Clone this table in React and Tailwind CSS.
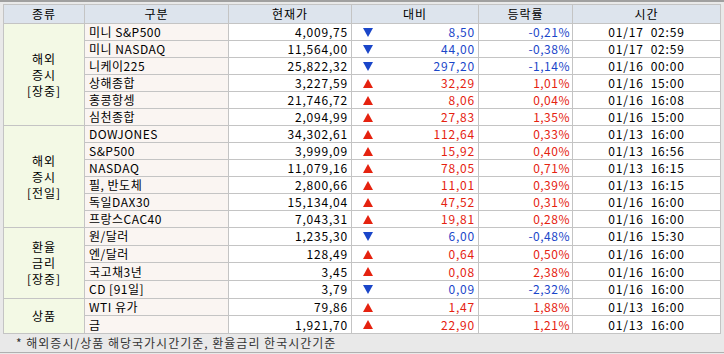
const groups = [
  {
    label: ["해외", "증시", "[장중]"],
    rows: [
      ["미니 S&P500", "4,009,75", "down", "8,50", "-0,21%", "01/17  02:59"],
      ["미니 NASDAQ", "11,564,00", "down", "44,00", "-0,38%", "01/17  02:59"],
      ["니케이225", "25,822,32", "down", "297,20", "-1,14%", "01/16  00:00"],
      ["상해종합", "3,227,59", "up", "32,29", "1,01%", "01/16  15:00"],
      ["홍콩항셍", "21,746,72", "up", "8,06", "0,04%", "01/16  16:08"],
      ["심천종합", "2,094,99", "up", "27,83", "1,35%", "01/16  15:00"],
    ],
  },
  {
    label: ["해외", "증시", "[전일]"],
    rows: [
      ["DOWJONES", "34,302,61", "up", "112,64", "0,33%", "01/13  16:00"],
      ["S&P500", "3,999,09", "up", "15,92", "0,40%", "01/13  16:56"],
      ["NASDAQ", "11,079,16", "up", "78,05", "0,71%", "01/13  16:15"],
      ["필, 반도체", "2,800,66", "up", "11,01", "0,39%", "01/13  16:15"],
      ["독일DAX30", "15,134,04", "up", "47,52", "0,31%", "01/16  16:00"],
      ["프랑스CAC40", "7,043,31", "up", "19,81", "0,28%", "01/16  16:00"],
    ],
  },
  {
    label: ["환율", "금리", "[장중]"],
    rows: [
      ["원/달러", "1,235,30", "down", "6,00", "-0,48%", "01/16  15:30"],
      ["엔/달러", "128,49", "up", "0,64", "0,50%", "01/16  16:00"],
      ["국고채3년", "3,45", "up", "0,08", "2,38%", "01/16  16:00"],
      ["CD [91일]", "3,79", "down", "0,09", "-2,32%", "01/16  16:00"],
    ],
  },
  {
    label: ["상품"],
    rows: [
      ["WTI 유가", "79,86", "up", "1,47", "1,88%", "01/13  16:00"],
      ["금", "1,921,70", "up", "22,90", "1,21%", "01/13  16:00"],
    ],
  },
];

const Arrow = ({ dir }) =>
  dir === "up" ? (
    <svg width="10" height="9" viewBox="0 0 10 9">
      <polygon points="5,0 10,9 0,9" fill="#e5220f" />
    </svg>
  ) : (
    <svg width="10" height="9" viewBox="0 0 10 9">
      <polygon points="0,0 10,0 5,9" fill="#1a46c9" />
    </svg>
  );

const App = () => {
  return (
    <div
      className="w-[724px] h-[354px] bg-[#e9e9e9] border-t-2 border-[#a0a0a0] overflow-hidden text-[12px] text-black"
      style={{ fontFamily: '"Noto Sans CJK KR", "Noto Sans", sans-serif' }}
    >
      <div className="pt-[2px] pl-[3px]">
        <table className="border-collapse border border-[#8f8f8f] table-fixed w-[717px]">
          <colgroup>
            <col className="w-[81px]" />
            <col className="w-[144px]" />
            <col className="w-[123px]" />
            <col className="w-[127px]" />
            <col className="w-[94px]" />
            <col className="w-[148px]" />
          </colgroup>
          <thead>
            <tr className="h-[19px] bg-[#dde4ed]">
              {["종류", "구분", "현재가", "대비", "등락률", "시간"].map((h) => (
                <th key={h} className="border border-[#c4c4c4] font-normal text-center leading-none p-0 tracking-[1px]">
                  {h}
                </th>
              ))}
            </tr>
          </thead>
          <tbody>
            {groups.map((g, gi) =>
              g.rows.map((r, ri) => {
                const up = r[2] === "up";
                const tone = up ? "text-[#e5220f]" : "text-[#1a46c9]";
                return (
                  <tr key={gi + "-" + ri} className={gi >= 2 ? "h-[17.7px]" : "h-[17px]"}>
                    {ri === 0 && (
                      <td
                        rowSpan={g.rows.length}
                        className="border border-[#c4c4c4] bg-[#f3f9e5] text-center leading-[16px] p-0 tracking-[1px]"
                      >
                        {g.label.map((l) => (
                          <div key={l}>{l}</div>
                        ))}
                      </td>
                    )}
                    <td className="border border-[#c4c4c4] bg-[#faf5f2] pl-[4px] leading-none p-0 whitespace-nowrap tracking-[0.5px]">
                      {r[0]}
                    </td>
                    <td className="border border-[#c4c4c4] bg-white text-right pr-[3px] leading-none p-0 tracking-[0.8px]">
                      {r[1]}
                    </td>
                    <td className="border border-[#c4c4c4] bg-white p-0 leading-none">
                      <div className="flex items-center justify-between pl-[11px] pr-[3px]">
                        <Arrow dir={r[2]} />
                        <span className={"tracking-[0.8px] " + tone}>{r[3]}</span>
                      </div>
                    </td>
                    <td className={"border border-[#c4c4c4] bg-white text-right pr-[2px] leading-none p-0 tracking-[0.5px] " + tone}>
                      {r[4]}
                    </td>
                    <td className="border border-[#c4c4c4] bg-white text-center leading-none p-0 whitespace-pre tracking-[0.8px]">
                      {r[5]}
                    </td>
                  </tr>
                );
              })
            )}
          </tbody>
        </table>
      </div>
      <div className="h-[18px] flex items-center pl-[16px] text-[#333] tracking-[1px]">
        * 해외증시/상품 해당국가시간기준, 환율금리 한국시간기준
      </div>
      <div className="h-[4px] border-t border-[#b0b0b0]" />
    </div>
  );
};

export default App;
